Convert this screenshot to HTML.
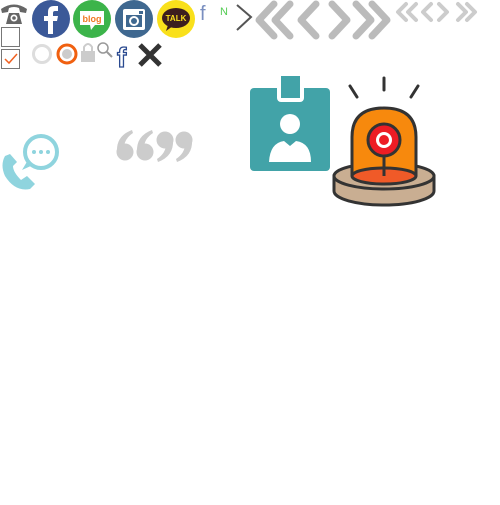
<!DOCTYPE html>
<html><head><style>body{margin:0;background:#fff;width:500px;height:500px;overflow:hidden}</style></head><body>
<svg width="500" height="500" viewBox="0 0 500 500" xmlns="http://www.w3.org/2000/svg">
<!-- phone -->
<g fill="#666"><path d="M1 9 Q14 0 27 9 L26 13 L20 12 L19 8 Q14 6 9 8 L8 12 L2 13Z"/><path d="M6 24 L9 13 H19 L22 24Z"/></g><circle cx="14" cy="18" r="3.5" fill="#fff"/><circle cx="14" cy="18" r="1.8" fill="#666"/>
<!-- fb -->
<circle cx="51" cy="19" r="19" fill="#3b5998"/>
<path d="M48 34 V21 H44 V16 H48 V12 Q48 6 54 6 H58 V11 H55 Q53 11 53 13 V16 H58 L57 21 H53 V34Z" fill="#fff"/>
<!-- blog -->
<circle cx="92" cy="19" r="19" fill="#3cb44a"/>
<path d="M80 11 H104 V25 H95 L91 30 L90 25 H80Z" fill="#fff"/>
<text x="92" y="22" font-family="Liberation Sans" font-weight="bold" font-size="9" fill="#f07822" text-anchor="middle">blog</text>
<!-- insta -->
<circle cx="134" cy="19" r="19" fill="#3f6890"/>
<rect x="123" y="9" width="22" height="21" rx="2" fill="#fff"/>
<rect x="126" y="15" width="16" height="12" fill="#3f6890"/>
<circle cx="134" cy="21" r="5" fill="#fff"/><circle cx="134" cy="21" r="3" fill="#3f6890"/>
<rect x="139" y="11" width="4" height="3" fill="#3f6890"/>
<!-- kakao -->
<circle cx="176" cy="19" r="19" fill="#f9e01b"/>
<ellipse cx="176" cy="18" rx="14" ry="10" fill="#3c1e1e"/><path d="M168 25 L166 31 L173 26Z" fill="#3c1e1e"/>
<text x="176" y="21" font-family="Liberation Sans" font-weight="bold" font-size="8" fill="#f9e01b" text-anchor="middle">TALK</text>
<text x="200" y="20" font-family="Liberation Sans" font-size="20" fill="#7a8fc0">f</text>
<text x="220" y="15" font-family="Liberation Sans" font-size="11" fill="#5c5">N</text>
<path d="M237 5 L251 17 L237 30" stroke="#555" stroke-width="2" fill="none"/>
<!-- chevrons -->
<g stroke="#bbb" stroke-width="7" fill="none" stroke-linecap="round" stroke-linejoin="round">
<path d="M274 4 L259 20 L274 36 M290 4 L275 20 L290 36"/>
<path d="M316 4 L301 20 L316 36 M332 4 L347 20 L332 36"/>
<path d="M356 4 L371 20 L356 36 M372 4 L387 20 L372 36"/>
</g>
<g stroke="#ccc" stroke-width="4" fill="none" stroke-linecap="round" stroke-linejoin="round">
<path d="M406 4 L398 12 L406 20 M416 4 L408 12 L416 20"/>
<path d="M431 4 L423 12 L431 20 M439 4 L447 12 L439 20"/>
<path d="M458 4 L466 12 L458 20 M467 4 L475 12 L467 20"/>
</g>
<!-- row 2 -->
<rect x="1.5" y="27.5" width="18" height="19" fill="none" stroke="#777"/>
<rect x="1.5" y="49.5" width="18" height="19" fill="none" stroke="#777"/>
<path d="M5 59 L9 63 L17 54" stroke="#f06020" stroke-width="1.5" fill="none"/>
<circle cx="42" cy="54" r="8.5" fill="none" stroke="#ddd" stroke-width="3"/>
<circle cx="67" cy="54" r="9" fill="none" stroke="#f06010" stroke-width="3"/><circle cx="67" cy="54" r="5" fill="#ccc"/>
<rect x="81" y="51" width="14" height="11" fill="#ccc"/><path d="M84 51 V47 Q88 41 92 47 V51" stroke="#ccc" stroke-width="2" fill="none"/>
<circle cx="103" cy="48" r="5" fill="none" stroke="#999" stroke-width="1.5"/><path d="M107 52 L112 57" stroke="#999" stroke-width="2"/>
<text x="117" y="67" font-family="Liberation Sans" font-weight="bold" font-size="28" fill="#fff" stroke="#2a4a90" stroke-width="1.3">f</text>
<path d="M140 45 L160 65 M160 45 L140 65" stroke="#333" stroke-width="5"/>
<!-- chat phone -->
<circle cx="41" cy="152" r="16" fill="none" stroke="#8fd4de" stroke-width="4"/>
<path d="M28 160 L22 170 L33 165Z" fill="#8fd4de"/>
<circle cx="34" cy="152" r="2" fill="#8fd4de"/><circle cx="41" cy="152" r="2" fill="#8fd4de"/><circle cx="48" cy="152" r="2" fill="#8fd4de"/>
<path d="M5 156 Q0 165 5 176 Q15 192 30 189 L35 184 L27 176 L21 180 Q13 172 13 166 L17 162 L10 154Z" fill="#8fd4de"/>
<!-- quotes 6699 -->
<g fill="#ccc">
<circle cx="125" cy="152" r="8.5"/><path d="M117 152 Q116 136 132 130 L133 133 Q124 139 124 148Z"/>
<circle cx="145" cy="152" r="8.5"/><path d="M137 152 Q136 136 152 130 L153 133 Q144 139 144 148Z"/>
<circle cx="165" cy="140" r="8.5"/><path d="M173 140 Q174 156 158 162 L157 159 Q166 153 166 144Z"/>
<circle cx="184" cy="140" r="8.5"/><path d="M192 140 Q193 156 177 162 L176 159 Q185 153 185 144Z"/>
</g>
<!-- badge -->
<rect x="250" y="88" width="80" height="83" rx="4" fill="#42a3a8"/>
<rect x="277" y="74" width="27" height="28" rx="4" fill="#fff"/>
<rect x="281" y="76" width="19" height="22" fill="#42a3a8"/>
<circle cx="290" cy="124" r="10" fill="#fff"/>
<path d="M269 162 Q270 143 284 141 L290 146 L296 141 Q311 143 311 162Z" fill="#fff"/>
<!-- siren -->
<g stroke="#333" stroke-width="3" stroke-linecap="round">
<path d="M350 86 L357 97 M384 78 V90 M418 86 L411 97"/></g>
<path d="M334 176 V191 A50 14 0 0 0 434 191 V176Z" fill="#c9ae92" stroke="#333" stroke-width="3"/>
<ellipse cx="384" cy="176" rx="50" ry="13" fill="#c9ae92" stroke="#333" stroke-width="3"/>
<path d="M352 176 V137 Q352 108 384 108 Q416 108 416 137 V176" fill="#f7890d" stroke="#333" stroke-width="3"/>
<ellipse cx="384" cy="176" rx="32" ry="8" fill="#f05a28" stroke="#333" stroke-width="3"/>
<path d="M384 155 V176" stroke="#333" stroke-width="3"/>
<circle cx="384" cy="140" r="16" fill="#ed1c24" stroke="#333" stroke-width="3"/>
<circle cx="384" cy="140" r="8" fill="#fff"/><circle cx="384" cy="140" r="5" fill="#ed1c24"/>
</svg>
</body></html>
